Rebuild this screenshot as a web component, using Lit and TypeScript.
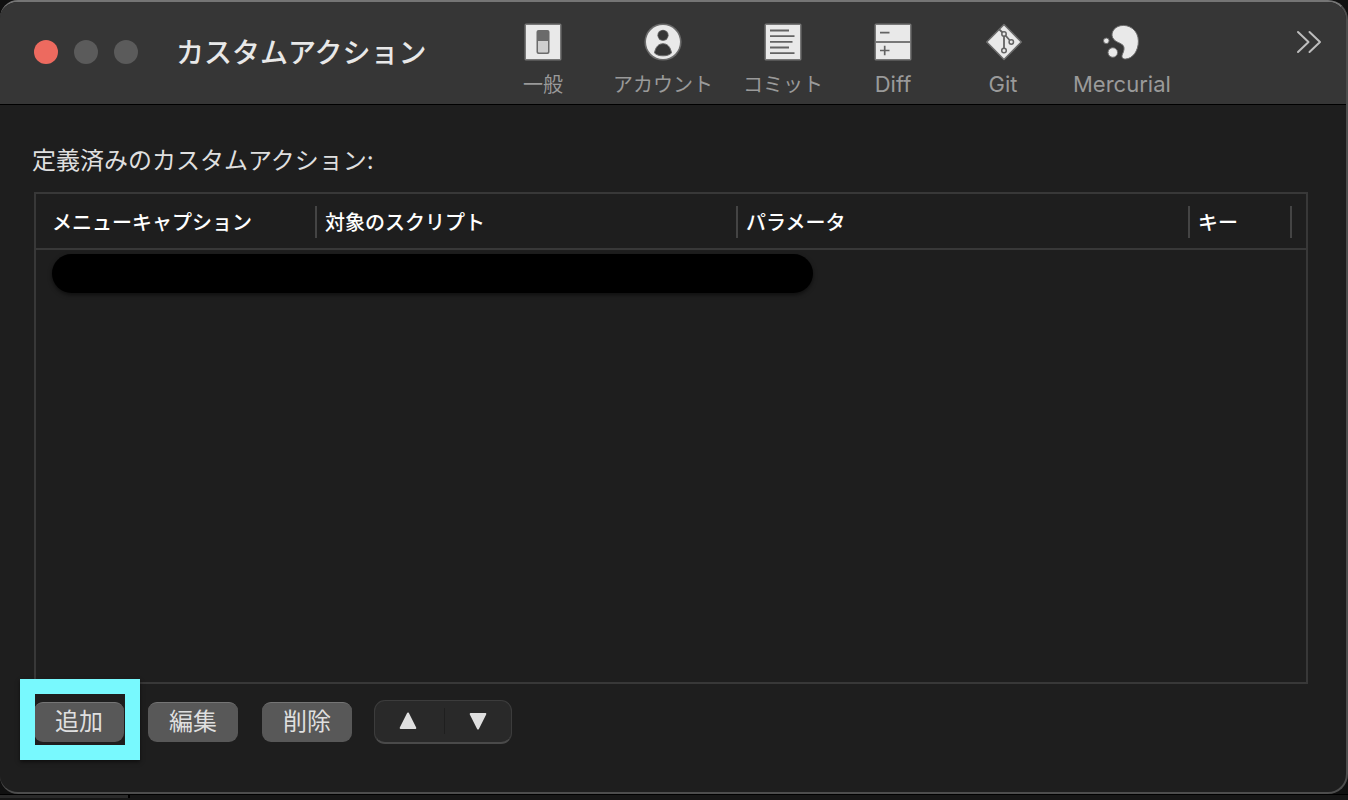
import { LitElement, html, css, svg } from "lit";
import { customElement } from "lit/decorators.js";

const generalIcon = svg`
  <rect x="0.5" y="0.5" width="37" height="37" rx="1.5" fill="#777"/>
  <rect x="2" y="2" width="34" height="34" fill="#e9e9e9"/>
  <rect x="12.5" y="7" width="13" height="24" rx="2" fill="#6b6b6b"/>
  <path d="M14 18h10v10.5a1 1 0 0 1-1 1h-8a1 1 0 0 1-1-1z" fill="#cfcfcf"/>`;

const accountIcon = svg`
  <circle cx="19" cy="19" r="18.6" fill="#6b6b6b"/>
  <circle cx="19" cy="19" r="17" fill="#e9e9e9"/>
  <circle cx="19" cy="12.3" r="5.6" fill="#6b6b6b"/>
  <circle cx="19" cy="12.3" r="4.8" fill="#363636"/>
  <path d="M10.500 30C11.500 24 14.500 20.700 19 20.700s7.500 3.300 8.500 9.300C25.500 32 22.500 32.800 19 32.800s-6.500-.8-8.500-2.800z" fill="#363636" stroke="#6b6b6b" stroke-width="1"/>`;

const commitIcon = svg`
  <rect x="0.5" y="0.5" width="37" height="37" rx="1.5" fill="#777"/>
  <rect x="2" y="2" width="34" height="34" fill="#e9e9e9"/>
  <path d="M6 7.500h19M6 13.200h24.500M6 18.800h22.500M6 24.500h19M6 30.200h24.500" stroke="#636363" stroke-width="1.800" fill="none"/>`;

const diffIcon = svg`
  <rect x="0.5" y="0.5" width="37" height="37" rx="1.5" fill="#777"/>
  <path d="M2 2h34v16H2zM2 20h34v16H2z" fill="#e9e9e9"/>
  <path d="M6 9.700h9.500M6 27.500h9.500M10.700 22.800v9.400" stroke="#636363" stroke-width="1.700" fill="none"/>`;

const gitIcon = svg`
  <path d="M20 1.500L37.300 19 20 36.500 2.700 19z" fill="#e9e9e9" stroke="#6b6b6b" stroke-width="1.500" stroke-linejoin="round"/>
  <path d="M15.200 6.300l3.300 3.200M21.500 12.500l4 4.500M20 13v13" stroke="#636363" stroke-width="1.800" fill="none"/>
  <g fill="#e9e9e9" stroke="#636363" stroke-width="1.500">
    <circle cx="20" cy="11" r="2.200"/><circle cx="27.300" cy="19" r="2.200"/><circle cx="20" cy="27.500" r="2.300"/>
  </g>`;

const mercurialIcon = svg`
  <g fill="#e9e9e9" stroke="#6b6b6b" stroke-width="1">
    <path d="M17.500 2.700C26 1 35.300 7 35.400 18 35.500 28 29.500 35.800 22.500 36c-3.300 0-4.300-2.200-3-5 1.700-3.400 2.200-6.700.5-8.700-2.600-2.600-6.500-2.600-9.300-6C6.500 11.200 10.500 4 17.500 2.700z"/>
    <circle cx="3.300" cy="17.800" r="2.800"/>
    <circle cx="9.800" cy="29.500" r="4.800"/>
  </g>`;

const TOOLBAR = [
  { label: "一般", icon: generalIcon },
  { label: "アカウント", icon: accountIcon },
  { label: "コミット", icon: commitIcon },
  { label: "Diff", icon: diffIcon, latin: true },
  { label: "Git", icon: gitIcon, latin: true },
  { label: "Mercurial", icon: mercurialIcon, latin: true },
];

@customElement("app-root")
export class AppRoot extends LitElement {
  static styles = css`
    :host {
      display: flex;
      flex-direction: column;
      min-height: 100vh;
      box-sizing: border-box;
      background: #101010;
      color: #dfdfdf;
      font-family: Inter, "Noto Sans CJK JP", sans-serif;
    }
    * { box-sizing: border-box; }
    button {
      margin: 0;
      padding: 0;
      border: 0;
      background: none;
      color: inherit;
      font: inherit;
    }
    svg { display: block; }
    .window {
      flex: 1;
      display: flex;
      flex-direction: column;
      border: 2px solid #4d4d4d;
      border-top-color: #757575;
      border-left: 0;
      border-radius: 18px 20px 20px 18px;
      background: #1e1e1e;
      overflow: hidden;
    }
    .titlebar {
      display: flex;
      height: 103px;
      padding: 0 24px 0 34px;
      background: #363636;
      border-bottom: 1px solid #000;
    }
    .lights {
      display: flex;
      align-items: center;
      gap: 16px;
      padding-bottom: 2px;
      margin-right: 38px;
    }
    .light {
      width: 24px;
      height: 24px;
      border-radius: 50%;
      background: #5b5b5b;
    }
    .close { background: #ed6a5f; }
    .title {
      margin: 0;
      width: 327px;
      font-size: 28px;
      line-height: 102px;
      font-weight: 500;
      color: #e8e8e8;
      white-space: nowrap;
    }
    .toolbar {
      display: flex;
      align-items: flex-start;
      gap: 30px;
      padding-top: 21px;
    }
    .tool {
      display: flex;
      flex-direction: column;
      align-items: center;
      gap: 9px;
      min-width: 80px;
      color: #9a9a9a;
      font-size: 20px;
      line-height: 30px;
      white-space: nowrap;
    }
    .latin {
      font-size: 22px;
      line-height: 28px;
    }
    .more {
      align-self: flex-start;
      margin-left: auto;
      padding-top: 28px;
    }
    .content {
      flex: 1;
      display: flex;
      flex-direction: column;
      padding: 38px 38px 48px 34px;
    }
    .caption {
      margin: 0 0 13px -2px;
      font-size: 24px;
      line-height: 36px;
      font-weight: 400;
    }
    .list {
      flex: 1;
      border: 2px solid #383838;
    }
    .table {
      width: 100%;
      border-collapse: collapse;
      table-layout: fixed;
    }
    .name { width: 281px; }
    .script { width: 421px; }
    .key { width: 102px; }
    .rest { width: 14px; }
    .head { border-bottom: 2px solid #383838; }
    .th {
      padding: 12px 0 10px;
      text-align: left;
      font-weight: 500;
      font-size: 20px;
      line-height: 30px;
      color: #fff;
    }
    .cell {
      padding: 2px 0 0 8px;
      border-right: 2px solid #444;
    }
    .th:first-child .cell { padding-left: 16px; }
    .td { padding: 4px 16px; }
    .redacted {
      width: 61.5%;
      height: 39px;
      border-radius: 20px;
      background: #000;
      box-shadow: 0 2px 4px #0008;
    }
    .actions {
      display: flex;
      align-items: center;
      gap: 24px;
      margin-top: 16px;
    }
    .slot { position: relative; }
    .push {
      display: block;
      width: 90px;
      height: 40px;
      border-radius: 9px;
      background: #585858;
      border-top: 1px solid #757575;
      font-size: 24px;
      line-height: 36px;
      padding-bottom: 2px;
    }
    .marker {
      position: absolute;
      inset: -23px -16px -18px -14px;
      border: 15px solid #78f9fe;
      box-shadow: 0 2px 4px #0008;
      pointer-events: none;
    }
    .segment {
      display: flex;
      align-items: center;
      gap: 2px;
      width: 138px;
      height: 44px;
      margin-left: -2px;
      padding-bottom: 2px;
      border: 1px solid #3c3c3c;
      border-bottom: 2px solid #4a4a4a;
      border-radius: 11px;
      background: #292929;
    }
    .step {
      flex: 1;
      height: 26px;
      display: flex;
      align-items: center;
      justify-content: center;
    }
    .step + .step { border-left: 1px solid #1f1f1f; }
    .behind {
      height: 6px;
      border-top: 1px solid #000;
      background: #161616;
    }
    .behind-pane {
      width: 130px;
      height: 3px;
      background: #2a2a2a;
      border-right: 2px solid #000;
    }
  `;

  render() {
    return html`
      <main class="window">
        <header class="titlebar">
          <div class="lights">
            <button class="light close" aria-label="閉じる"></button>
            <button class="light" aria-label="しまう" disabled></button>
            <button class="light" aria-label="拡大" disabled></button>
          </div>
          <h1 class="title">カスタムアクション</h1>
          <nav class="toolbar">
            ${TOOLBAR.map(
              (t) => html`<button class="tool ${t.latin ? "latin" : ""}">
                <svg width="38" height="38" viewBox="0 0 38 38" aria-hidden="true">${t.icon}</svg>
                <span>${t.label}</span>
              </button>`
            )}
          </nav>
          <button class="more" aria-label="その他">
            <svg width="26" height="24" viewBox="0 0 26 24" fill="none" stroke="#bdbdbd" stroke-width="2" stroke-linecap="round" stroke-linejoin="round">
              <path d="M2 2l10.500 10L2 22M13.500 2L24 12 13.500 22"/>
            </svg>
          </button>
        </header>
        <section class="content">
          <h2 class="caption" id="caption">定義済みのカスタムアクション:</h2>
          <div class="list">
            <table class="table" aria-labelledby="caption">
              <colgroup>
                <col class="name" /><col class="script" /><col /><col class="key" /><col class="rest" />
              </colgroup>
              <thead class="head">
                <tr>
                  ${["メニューキャプション", "対象のスクリプト", "パラメータ", "キー"].map(
                    (h) => html`<th class="th" scope="col"><div class="cell">${h}</div></th>`
                  )}
                  <td></td>
                </tr>
              </thead>
              <tbody>
                <tr><td class="td" colspan="5"><div class="redacted"></div></td></tr>
              </tbody>
            </table>
          </div>
          <div class="actions">
            <div class="slot">
              <button class="push">追加</button>
              <div class="marker"></div>
            </div>
            <button class="push">編集</button>
            <button class="push">削除</button>
            <div class="segment">
              <button class="step" aria-label="上へ">
                <svg width="18" height="18" viewBox="0 0 18 18"><path d="M9 1.500L16.300 16H1.700z" fill="#dfdfdf" stroke="#dfdfdf" stroke-width="2" stroke-linejoin="round"/></svg>
              </button>
              <button class="step" aria-label="下へ">
                <svg width="18" height="18" viewBox="0 0 18 18"><path d="M9 16.500L16.300 2H1.700z" fill="#dfdfdf" stroke="#dfdfdf" stroke-width="2" stroke-linejoin="round"/></svg>
              </button>
            </div>
          </div>
        </section>
      </main>
      <div class="behind"><div class="behind-pane"></div></div>
    `;
  }
}
